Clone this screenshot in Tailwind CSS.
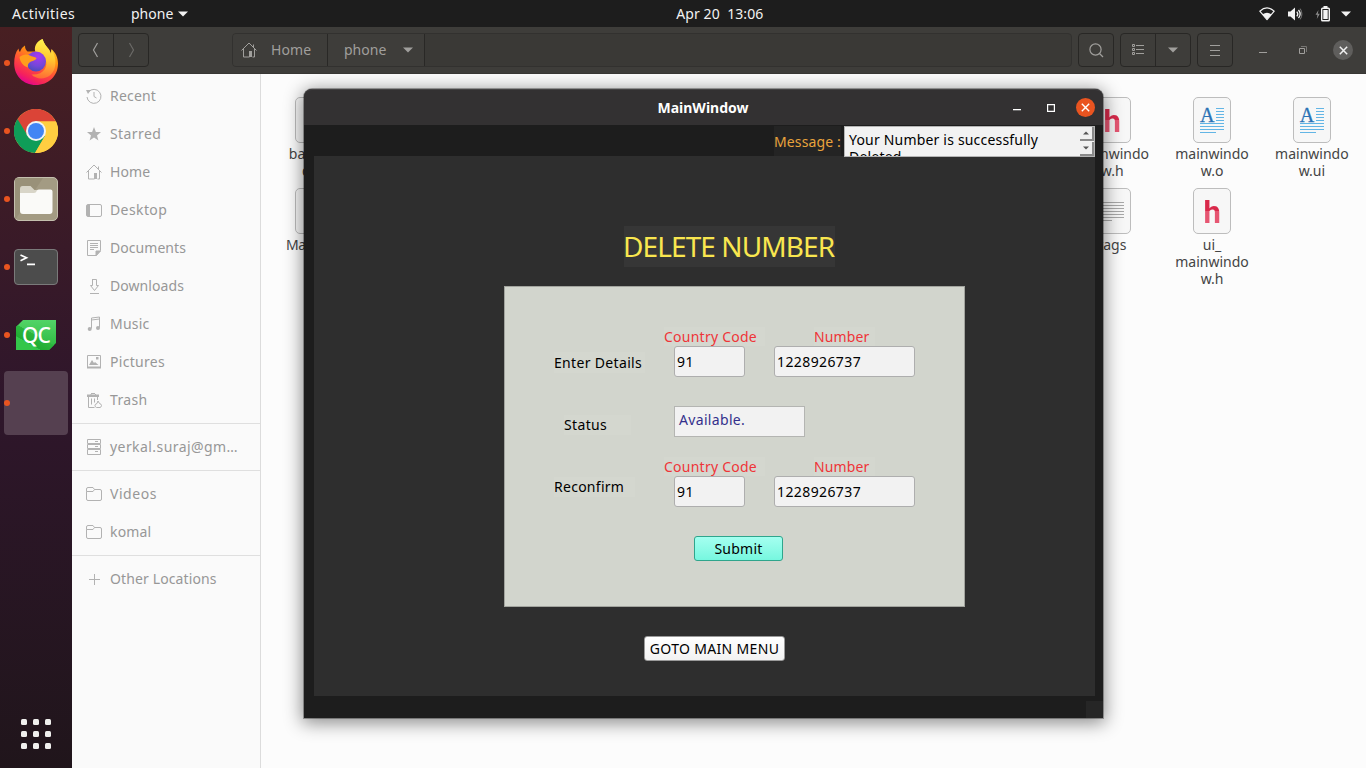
<!DOCTYPE html>
<html lang="en">
<head>
<meta charset="utf-8">
<title>phone</title>
<script src="https://cdn.jsdelivr.net/npm/@tailwindcss/browser@4"></script>
</head>
<body class="w-[1366px] h-[768px] overflow-hidden font-['Noto_Sans',sans-serif] text-[14px] leading-5 whitespace-nowrap bg-[#fcfcfc]">
<div class="relative w-[1366px] h-[768px] flex flex-col overflow-hidden">

<!-- top panel -->
<header class="h-[27px] shrink-0 bg-[#1d1d1d] text-[#f2f2f2] flex items-center leading-[26px]">
  <span class="pl-3 w-[131px] tracking-[0.5px]">Activities</span>
  <span>phone</span>
  <svg class="ml-[5px]" width="10" height="6"><path d="M0 0.5h10L5 5.5z" fill="#f2f2f2"/></svg>
  <span class="w-[488px] pl-[488px] box-border whitespace-pre tracking-[0.08px]">Apr 20  13:06</span>
  <div class="ml-auto flex items-center pr-[15px]">
    <svg class="mr-[12px]" width="16" height="14" viewBox="0 0 16 14"><path d="M.8 4.2Q8-2.4 15.2 4.2L8 12.6z" fill="none" stroke="#f2f2f2" stroke-width="1.2" stroke-linejoin="round"/><path d="M3.6 7.3Q8 4.2 12.4 7.3L8 12.6z" fill="#f2f2f2"/></svg>
    <svg class="mr-[12px]" width="16" height="14" viewBox="0 0 16 14"><path d="M1 4.5h2.5L8 .6v12.8L3.500 9.500H1z" fill="#f2f2f2"/><path d="M9.800 4.600q2 2.400 0 4.800M11.500 3q3.300 4 0 8" fill="none" stroke="#f2f2f2" stroke-width="1.300"/><path d="M13.200 1.600q3.400 5.400 0 10.800" fill="none" stroke="#777" stroke-width="1"/></svg>
    <svg class="mr-[11px]" width="15" height="16" viewBox="0 0 15 16"><path d="M3.500 4L.5 8.800h2L1.800 13l3-5.200h-2z" fill="#8d8d8d"/><rect x="6.700" y="2.200" width="7.600" height="12.600" rx=".8" fill="none" stroke="#f2f2f2" stroke-width="1.400"/><path d="M8.500 0h4v2h-4zM8.300 4h4.400v9H8.300z" fill="#f2f2f2"/></svg>
    <svg width="10" height="6"><path d="M0 0.500h10L5 5.500z" fill="#f2f2f2"/></svg>
  </div>
</header>

<div class="flex flex-1 min-h-0">

<!-- dock -->
<nav class="w-[72px] shrink-0 pt-1 flex flex-col gap-1 bg-linear-to-b from-[#481f22] via-[#2f162b] via-50% to-[#20151b]">
  <div class="h-16 flex items-center">
    <i class="ml-1 size-[6px] rounded-full bg-[#e95420]"></i>
    <svg class="ml-[3px] mb-[3px]" width="46" height="47" viewBox="0 0 46 47">
      <defs>
        <linearGradient id="fx" x1=".8" y1=".1" x2=".35" y2="1"><stop offset="0" stop-color="#ffd43a"/><stop offset=".3" stop-color="#ff980e"/><stop offset=".62" stop-color="#ff4a3c"/><stop offset=".85" stop-color="#f5225c"/><stop offset="1" stop-color="#e3058f"/></linearGradient>
        <linearGradient id="fy" x1=".5" y1="0" x2=".4" y2="1"><stop offset="0" stop-color="#fff44f"/><stop offset=".5" stop-color="#ffc52f"/><stop offset="1" stop-color="#ff6a35"/></linearGradient>
        <radialGradient id="fp" cx=".6" cy=".25" r=".8"><stop offset="0" stop-color="#a838f0"/><stop offset=".6" stop-color="#7447d8"/><stop offset="1" stop-color="#454db8"/></radialGradient>
      </defs>
      <path d="M5.500 10.500c.2 2 .8 3 1.500 3.500 1-3 2.700-5.200 5-6.500 0 3 .8 4.500 2.500 6h9.500c-1.500-5 1.500-10.500 5.500-12.500 1.500 5 4 7.500 6.500 10.500 1 1.500 1.500 3 2 4.500l.5-5c4 3.500 6.500 8.500 6.500 14.500 0 12.500-9.500 21.500-22.200 21.500S1.200 37.500 1.200 25.500C1.200 19.500 2.500 14 5.500 10.500z" fill="url(#fx)"/>
      <path d="M22.500 14c-2-5 1-11 7-13 1.500 5 4 7.500 6.500 10.500 1 1.500 1.500 3 2 4.500l.5-4.500c5.500 8.500 5.500 19.500-1 25.500-6 5.200-15 4-19-.5 12 1 17-8 14-15-1.500-4-5-6.500-10-7.500z" fill="url(#fy)"/>
      <circle cx="23" cy="23.500" r="10" fill="url(#fp)"/>
      <path d="M6.500 19c3-2.500 7-3.500 10.500-1.500 2 1.200 5 1 6.500 2.500-.5 2.700-4 2.500-7 4.500-1.500 1.300-2 3-1.500 5-5-1.500-8-5.500-8.500-10.500z" fill="#ff9d1c"/>
    </svg>
  </div>
  <div class="h-16 flex items-center">
    <i class="ml-1 size-[6px] rounded-full bg-[#e95420]"></i>
    <svg class="ml-[4px]" width="44" height="44" viewBox="-22 -22 44 44">
      <circle r="22" fill="#ffce41"/>
      <path d="M-19.100-11A22 22 0 0 1 19.800-9.600H0L-8.300 4.800z" fill="#db4437"/>
      <path d="M-18.500-12A22 22 0 0 0-1 22L9 5-8.300 4.800z" fill="#0f9d58"/>
      <path d="M20-9.600H0L9 5-1 22A22 22 0 0 0 20-9.600z" fill="#ffce41"/>
      <circle r="10" fill="#f3f3f3"/><circle r="8" fill="#4285f4"/>
    </svg>
  </div>
  <div class="h-16 flex items-center">
    <i class="ml-1 size-[6px] rounded-full bg-[#e95420]"></i>
    <svg class="ml-[3px]" width="46" height="46" viewBox="0 0 46 46">
      <rect x="1.500" y="1.500" width="43" height="43" rx="4.500" fill="#a39b83" stroke="#c4bfae"/>
      <path d="M2 44V2h28z" fill="#938b73" opacity=".6"/>
      <path d="M7 13q0-3 2.500-3h8l4 4h14q2 0 2 2v4H7z" fill="#d8d5c8"/>
      <path d="M7 17h14q2 0 3-2.500.500-1 2-1h11.500q2 0 2 2V35q0 3-3 3h-26.500Q7 38 7 35z" fill="#fafaf8"/>
    </svg>
  </div>
  <div class="h-16 flex items-center">
    <i class="ml-1 size-[6px] rounded-full bg-[#e95420]"></i>
    <div class="ml-[4px] w-[44px] h-[36px] rounded-[4px] bg-[#4c4c4c] border border-[#7a7a7a]">
      <svg width="42" height="34" fill="none" stroke="#fff" stroke-width="1.700"><path d="M5.500 5l6 2.800-6 2.900M12 14.300h8"/></svg>
    </div>
  </div>
  <div class="h-16 flex items-center">
    <i class="ml-1 size-[6px] rounded-full bg-[#e95420]"></i>
    <div class="ml-[6px] w-10 h-[30px] bg-linear-to-b from-[#52d467] to-[#28b83c] [clip-path:polygon(7px_0,100%_0,100%_23px,33px_100%,0_100%,0_7px)] text-white text-[21px] leading-[30px] font-medium text-center tracking-[-1px]"><div class="bg-[linear-gradient(29deg,#34c64a_26%,#20ab32_27%,#2bb63e_49%,transparent_50%)]">QC</div></div>
  </div>
  <div class="h-16 w-16 ml-1 rounded-[4px] bg-[#554050] flex items-center">
    <i class="size-[6px] rounded-full bg-[#e95420]"></i>
  </div>
  <div class="mt-auto mb-[19px] ml-[21px] grid grid-cols-[6px_6px_6px] gap-[6px]">
    <i class="size-[6px] rounded-[1.500px] bg-[#f0f0ee]"></i><i class="size-[6px] rounded-[1.500px] bg-[#f0f0ee]"></i><i class="size-[6px] rounded-[1.500px] bg-[#f0f0ee]"></i>
    <i class="size-[6px] rounded-[1.500px] bg-[#f0f0ee]"></i><i class="size-[6px] rounded-[1.500px] bg-[#f0f0ee]"></i><i class="size-[6px] rounded-[1.500px] bg-[#f0f0ee]"></i>
    <i class="size-[6px] rounded-[1.500px] bg-[#f0f0ee]"></i><i class="size-[6px] rounded-[1.500px] bg-[#f0f0ee]"></i><i class="size-[6px] rounded-[1.500px] bg-[#f0f0ee]"></i>
  </div>
</nav>

<!-- file manager -->
<main class="flex-1 min-w-0 flex flex-col">
  <div class="h-[47px] shrink-0 bg-[#3e3d3a] border-b border-[#383734] pt-[6px] pl-[6px] flex items-start text-[#a09f9c]">
    <div class="w-[71px] h-[34px] rounded-[4px] border border-[#282725] flex">
      <div class="w-[35px] border-r border-[#282725] flex items-center justify-center"><svg class="mr-[2px]" width="7" height="16" fill="none" stroke="#a09f9c" stroke-width="1.200"><path d="M5.500 1L1.500 8l4 7"/></svg></div>
      <div class="flex-1 flex items-center justify-center"><svg width="7" height="16" fill="none" stroke="#6b6a67" stroke-width="1.200"><path d="M1.500 1l4 7-4 7"/></svg></div>
    </div>
    <div class="ml-[83px] w-[840px] h-[34px] rounded-[4px] border border-[#32312f] bg-[#3a3936] flex items-center overflow-hidden">
      <div class="w-[95px] h-full border-r border-[#292826] bg-[#3e3d3a] flex items-center pl-2">
        <svg width="16" height="16" viewBox="0 0 16 16" fill="none" stroke="#a09f9c"><path d="M.5 8.500L8 1l7.500 7.500M12.500 5V2.500M2.500 7v8h6M13.500 7v8h-2"/><path d="M8 9h3v6H8z" fill="#a09f9c" stroke="none"/></svg>
        <span class="ml-[14px] tracking-[0.100px]">Home</span>
      </div>
      <div class="w-[97px] h-full border-r border-[#292826] bg-[#3e3d3a] flex items-center pl-4">
        <span>phone</span>
        <svg class="ml-[17px]" width="10" height="6"><path d="M0 .5h10l-5 5z" fill="#a09f9c"/></svg>
      </div>
    </div>
    <div class="ml-[6px] w-9 h-[34px] rounded-[4px] border border-[#282725] flex items-center justify-center"><svg width="15" height="15" fill="none" stroke="#a09f9c" stroke-width="1.200"><circle cx="6.500" cy="6.500" r="5.600"/><path d="M10.500 10.500l3.500 3.500"/></svg></div>
    <div class="ml-[6px] w-[71px] h-[34px] rounded-[4px] border border-[#282725] flex">
      <div class="w-[35px] border-r border-[#282725] flex items-center justify-center"><svg width="12" height="12" fill="none" stroke="#a09f9c"><path d="M.5.5h2v2h-2zM.5 4.500h2v2h-2zM.5 8.500h2v2h-2zM4 1.500h8M4 5.500h8M4 9.500h8"/></svg></div>
      <div class="flex-1 flex items-center justify-center"><svg width="10" height="6"><path d="M0 .5h10l-5 5z" fill="#a09f9c"/></svg></div>
    </div>
    <div class="ml-[6px] w-9 h-[34px] rounded-[4px] border border-[#282725] flex items-center justify-center"><svg width="10" height="11" fill="none" stroke="#a09f9c"><path d="M0 .5h10M0 5.500h10M0 10.500h10"/></svg></div>
    <div class="ml-[26px] h-[34px] flex items-center">
      <svg width="8" height="10"><path d="M0 7h8v1H0z" fill="#a09f9c"/></svg>
      <svg class="ml-8" width="8" height="9" fill="none"><path d="M.5 2.500h5v5h-5z" stroke="#a09f9c"/><path d="M2 .5h5.500V6" stroke="#777673"/></svg>
      <div class="ml-[26px] size-5 rounded-full bg-[#5f5e5c] flex items-center justify-center"><svg width="9" height="9" stroke="#f0f0f0" stroke-width="1.500"><path d="M.8.8l7.400 7.400M8.200.8L.8 8.200"/></svg></div>
    </div>
  </div>

  <div class="flex-1 min-h-0 flex">
    <aside class="w-[189px] shrink-0 bg-[#fafafa] border-r border-[#dcdcdc] pt-[3px] text-[#979797]">
      <div class="h-[38px] pl-[14px] flex items-center gap-2"><svg width="16" height="16" fill="none" stroke="#b2b2b2"><path d="M2.500 4A7 7 0 1 1 1 9M8 4v4.500l2.500 1.500"/><path d="M0 2l4.800 0L2 6z" fill="#b2b2b2" stroke="none"/></svg><span class="tracking-[0.200px]">Recent</span></div>
      <div class="h-[38px] pl-[14px] flex items-center gap-2"><svg width="16" height="16"><path d="M8 1l1.900 4.900 5.100.2-4 3.300 1.400 5.100L8 11.600l-4.400 2.900L5 9.400 1 6.100l5.100-.2z" fill="#b2b2b2"/></svg><span class="tracking-[0.400px]">Starred</span></div>
      <div class="h-[38px] pl-[14px] flex items-center gap-2"><svg width="16" height="16" fill="none" stroke="#b2b2b2"><path d="M.5 8.500L8 1l7.500 7.500M12.500 5V2.500M2.500 7v8h6M13.500 7v8h-2"/><path d="M8 9h3v6H8z" fill="#b2b2b2" stroke="none"/></svg><span class="tracking-[0.100px]">Home</span></div>
      <div class="h-[38px] pl-[14px] flex items-center gap-2"><svg width="16" height="16" fill="none" stroke="#b2b2b2"><rect x=".5" y="2.500" width="15" height="12" rx="1.500"/><path d="M1 3h3v11H1z" fill="#b2b2b2" stroke="none"/></svg><span class="tracking-[0.400px]">Desktop</span></div>
      <div class="h-[38px] pl-[14px] flex items-center gap-2"><svg width="16" height="16" fill="none" stroke="#b2b2b2"><path d="M1.500.5h13v10l-4 5h-9zM4 3.500h8M4 5.500h8M4 7.500h8M4 9.500h4"/><path d="M10 11h4.500L10 15.500z" fill="#b2b2b2"/></svg><span class="tracking-[0.050px]">Documents</span></div>
      <div class="h-[38px] pl-[14px] flex items-center gap-2"><svg width="16" height="16" fill="none" stroke="#b2b2b2"><path d="M6.500 1v6.500h-2l4 5 4-5h-2V1.500h-4M4 15.500h9"/></svg><span class="tracking-[0.070px]">Downloads</span></div>
      <div class="h-[38px] pl-[14px] flex items-center gap-2"><svg width="16" height="16" fill="none" stroke="#b2b2b2"><path d="M5.500 12.500V2l8-1v10.500M5.500 4l8-1"/><circle cx="3.700" cy="13" r="2" fill="#b2b2b2" stroke="none"/><circle cx="12" cy="12" r="2" fill="#b2b2b2" stroke="none"/></svg><span class="tracking-[0.200px]">Music</span></div>
      <div class="h-[38px] pl-[14px] flex items-center gap-2"><svg width="16" height="16" fill="none" stroke="#b2b2b2"><path d="M1.500 1.500h13v12h-13z"/><path d="M1 12.500h14v2H1zM3 11l3-5 2 3 1-1 3.500 3zM10 3h2.500v2.500H10z" fill="#b2b2b2" stroke="none"/></svg><span class="tracking-[0.300px]">Pictures</span></div>
      <div class="h-[38px] pl-[14px] flex items-center gap-2"><svg width="16" height="16" fill="none" stroke="#b2b2b2"><path d="M5 1.500h4M2.500 5v10.500h6M5.500 6.500v6M8.500 6.500v4M11.500 5v3M5 2v1M9.500 2v1"/><path d="M1 2.500h12V5H1z" fill="#b2b2b2" stroke="none"/><path d="M12 9l1.500 2.500q2 .5 2 2t-1.500 2h-3.500q-1.500-.5-1.500-2t2-2z"/></svg><span class="tracking-[0.350px]">Trash</span></div>
      <div class="my-1 h-px bg-[#dfdfdf]"></div>
      <div class="h-[38px] pl-[14px] flex items-center gap-2"><svg width="16" height="16" fill="none" stroke="#b2b2b2"><path d="M1.500.5h13v4h-13zM1.500 5.500h13v4h-13zM1.500 10.500h13v5h-13zM9 2.500h3M9 7.500h3M9 12.500h3"/></svg><span class="tracking-[0.430px]">yerkal.suraj@gm…</span></div>
      <div class="my-1 h-px bg-[#dfdfdf]"></div>
      <div class="h-[38px] pl-[14px] flex items-center gap-2"><svg width="16" height="16" fill="none" stroke="#b2b2b2"><path d="M.5 5.500V3q0-1.500 1.500-1.500h5l1.500 2h5.500q1.500 0 1.500 1.500v8q0 1.500-1.500 1.500H2Q.5 14.500.5 13V5.500h6.500l1.500-2"/></svg><span class="tracking-[0.550px]">Videos</span></div>
      <div class="h-[38px] pl-[14px] flex items-center gap-2"><svg width="16" height="16" fill="none" stroke="#b2b2b2"><path d="M.5 5.500V3q0-1.500 1.500-1.500h5l1.500 2h5.500q1.500 0 1.500 1.500v8q0 1.500-1.500 1.500H2Q.5 14.500.5 13V5.500h6.500l1.500-2"/></svg><span class="tracking-[0.150px]">komal</span></div>
      <div class="my-1 h-px bg-[#dfdfdf]"></div>
      <div class="h-[38px] pl-[14px] flex items-center gap-2"><svg width="16" height="16" fill="none" stroke="#b2b2b2"><path d="M8.500 3v11M3 8.500h11"/></svg><span class="tracking-[0.120px]">Other Locations</span></div>
    </aside>

    <section class="flex-1 min-w-0 pt-[23px] pl-[3px] grid grid-cols-[repeat(11,99.8px)] auto-rows-max gap-y-[9px] content-start text-center leading-[17px] text-[#444]">
      <div class="flex flex-col items-center"><div class="w-[38px] h-[46px] rounded-[5px] border border-[#bdbdbd] bg-[#f7f7f7] text-teal-600 text-3xl leading-[44px] font-bold">c</div><div class="mt-[2px] mr-[3px]">backen<br>d.o</div></div>
      <div class="col-start-9 flex flex-col items-center"><div class="w-[38px] h-[46px] rounded-[5px] border border-[#bdbdbd] bg-[#f7f7f7] flex justify-center"><span class="font-['Roboto',sans-serif] font-bold text-[31px] leading-[47px] bg-linear-to-b from-[#d92a4b] from-50% to-[#e65672] to-50% bg-clip-text text-transparent">h</span></div><div class="mt-[2px]">mainwindo<br>w.h</div></div>
      <div class="flex flex-col items-center"><div class="w-[38px] h-[46px] rounded-[5px] border border-[#bdbdbd] bg-[#f7f7f7] relative"><svg width="36" height="44" class="absolute" stroke="#62b5e5"><path d="M22 10.500h8M22 13.500h8M22 16.500h8M22 19.500h8M22 22.500h8M6 25.500h24M6 28.500h24M6 31.500h24M6 34.500h16"/></svg><span class="absolute left-[6px] top-[7px] font-['Liberation_Serif',serif] text-[20px] leading-5 text-[#2a72b5] [-webkit-text-stroke:0.3px_#2a72b5]">A</span></div><div class="mt-[2px]">mainwindo<br>w.o</div></div>
      <div class="flex flex-col items-center"><div class="w-[38px] h-[46px] rounded-[5px] border border-[#bdbdbd] bg-[#f7f7f7] relative"><svg width="36" height="44" class="absolute" stroke="#62b5e5"><path d="M22 10.500h8M22 13.500h8M22 16.500h8M22 19.500h8M22 22.500h8M6 25.500h24M6 28.500h24M6 31.500h24M6 34.500h16"/></svg><span class="absolute left-[6px] top-[7px] font-['Liberation_Serif',serif] text-[20px] leading-5 text-[#2a72b5] [-webkit-text-stroke:0.3px_#2a72b5]">A</span></div><div class="mt-[2px]">mainwindo<br>w.ui</div></div>
      <div class="flex flex-col items-center"><div class="w-[38px] h-[46px] rounded-[5px] border border-[#bdbdbd] bg-[#f7f7f7]"></div><div class="mt-[2px] mr-[3px] tracking-[-0.400px]">Makefile</div></div>
      <div class="col-start-9 flex flex-col items-center"><div class="w-[38px] h-[46px] rounded-[5px] border border-[#bdbdbd] bg-[#f7f7f7]"><svg width="36" height="44" stroke="#a8a8a8"><path d="M5 13.500h25M5 16.500h25M5 19.500h25M5 22.500h25M5 25.500h25M5 28.500h25M5 31.500h13"/></svg></div><div class="mt-[2px]">tags</div></div>
      <div class="flex flex-col items-center"><div class="w-[38px] h-[46px] rounded-[5px] border border-[#bdbdbd] bg-[#f7f7f7] flex justify-center"><span class="font-['Roboto',sans-serif] font-bold text-[31px] leading-[47px] bg-linear-to-b from-[#d92a4b] from-50% to-[#e65672] to-50% bg-clip-text text-transparent">h</span></div><div class="mt-[2px]">ui_<br>mainwindo<br>w.h</div></div>
    </section>
  </div>
</main>
</div>

<!-- application window -->
<div class="absolute left-[304px] top-[89px] w-[799px] h-[629px] rounded-t-lg bg-[#1d1d1d] shadow-[0_0_0_1px_rgba(0,0,0,0.3),0_3px_18px_2px_rgba(0,0,0,0.45)] flex flex-col">
  <div class="h-9 shrink-0 rounded-t-lg bg-[#333132] border-t border-[#444243] flex items-center text-white">
    <span class="flex-1 text-center font-bold text-[14px] pl-[89px]">MainWindow</span>
    <svg class="mr-[26px]" width="8" height="8"><path d="M0 5h8v1.300H0z" fill="#fff"/></svg>
    <svg class="mr-[21px]" width="8" height="8"><path d="M.600.600h6.800v6.800H.600z" fill="none" stroke="#fff" stroke-width="1.200"/></svg>
    <div class="mr-[8px] size-[19px] rounded-full bg-[#e95420] flex items-center justify-center"><svg width="9" height="9" stroke="#fff" stroke-width="1.400"><path d="M.8.8l7.400 7.400M8.200.8L.8 8.200"/></svg></div>
  </div>
  <div class="h-[31px] shrink-0 pt-px pl-[470px] flex items-start relative z-10">
    <div class="w-[67px] h-[30px] bg-[#242424] text-[#e9a33c] leading-[31px] tracking-[0.120px]">Message :</div>
    <div class="ml-[3px] w-[251px] h-[31px] bg-[#f2f2f2] border border-[#b4b4b4] text-black overflow-hidden flex">
      <div class="flex-1 pl-1 pt-[4px] leading-[17px] tracking-[0.190px]">Your Number is successfully<br>Deleted.</div>
      <div class="w-[14px] flex flex-col gap-px">
        <div class="h-[14px] bg-[#f0f0f0] border-r-2 border-b-2 border-[#8a8a8a] flex items-center justify-center"><svg width="6" height="4"><path d="M0 3.500L3 .5l3 3z" fill="#555"/></svg></div>
        <div class="h-[14px] bg-[#f0f0f0] border-r-2 border-b-2 border-[#8a8a8a] flex items-center justify-center"><svg width="6" height="4"><path d="M0 .5l3 3 3-3z" fill="#555"/></svg></div>
      </div>
    </div>
  </div>
  <div class="ml-[10px] w-[781px] h-[540px] shrink-0 bg-[#2e2e2e] pt-[70px] flex flex-col items-start">
    <h1 class="ml-[310px] w-[211px] h-[41px] bg-[#363636] text-[#f9e64f] text-[28px] leading-[40px] tracking-[-0.900px] indent-[-1px]">DELETE NUMBER</h1>
    <form class="ml-[190px] mt-[19px] w-[461px] h-[321px] border border-[#a2a49e] bg-[#d2d5cd] pl-[49px] pt-10 text-black">
      <div class="flex h-[50px]">
        <div class="w-[110px] pt-[25px]"><div class="w-[91px] h-[21px] leading-[21px] bg-[#d4d7cf] tracking-[0.330px]">Enter Details</div></div>
        <div>
          <div class="h-[19px] flex text-[#ef3438]"><span class="w-[101px] mr-[49px] bg-[#d4d7cf] tracking-[0.240px]">Country Code</span><span class="w-[61px] bg-[#d4d7cf] tracking-[0.100px]">Number</span></div>
          <div class="pl-[10px] flex gap-[29px]">
            <div class="w-[71px] h-[31px] rounded-[3px] border border-[#aeaeae] bg-[#f2f2f2] pl-[2px] leading-[30px] tracking-[0.400px]">91</div>
            <div class="w-[141px] h-[31px] rounded-[3px] border border-[#aeaeae] bg-[#f2f2f2] pl-[2px] leading-[30px] tracking-[0.400px]">1228926737</div>
          </div>
        </div>
      </div>
      <div class="mt-[29px] flex h-[31px]">
        <div class="w-[120px] pt-[9px] pl-[10px]"><div class="w-[67px] h-5 bg-[#d4d7cf] tracking-[0.350px]">Status</div></div>
        <div class="w-[131px] h-[31px] border border-[#b4b5b2] bg-[#f2f2f2] pl-1 pt-[3px] text-[#34308c] tracking-[0.330px]">Available.</div>
      </div>
      <div class="mt-5 flex h-[50px]">
        <div class="w-[110px] pt-5"><div class="w-[81px] h-5 bg-[#d4d7cf] tracking-[0.270px]">Reconfirm</div></div>
        <div>
          <div class="h-[19px] flex text-[#ef3438]"><span class="w-[101px] mr-[49px] bg-[#d4d7cf] tracking-[0.240px]">Country Code</span><span class="w-[61px] bg-[#d4d7cf] tracking-[0.100px]">Number</span></div>
          <div class="pl-[10px] flex gap-[29px]">
            <div class="w-[71px] h-[31px] rounded-[3px] border border-[#aeaeae] bg-[#f2f2f2] pl-[2px] leading-[30px] tracking-[0.400px]">91</div>
            <div class="w-[141px] h-[31px] rounded-[3px] border border-[#aeaeae] bg-[#f2f2f2] pl-[2px] leading-[30px] tracking-[0.400px]">1228926737</div>
          </div>
        </div>
      </div>
      <div class="ml-[140px] mt-[29px] w-[89px] h-[25px] rounded-[3px] border border-[#2fa58c] bg-linear-to-b from-[#a4fff0] to-[#76f7df] text-center leading-[24px] tracking-[0.250px]">Submit</div>
    </form>
    <div class="ml-[330px] mt-[29px] w-[141px] h-[25px] rounded-[3px] border border-[#9a9a9a] bg-linear-to-b from-white to-[#f2f2f2] text-black text-center leading-[24px] tracking-[0.330px]">GOTO MAIN MENU</div>
  </div>
  <div class="mt-auto ml-auto w-[17px] h-[17px] bg-[#262626]"></div>
</div>
</div>
</body>
</html>
